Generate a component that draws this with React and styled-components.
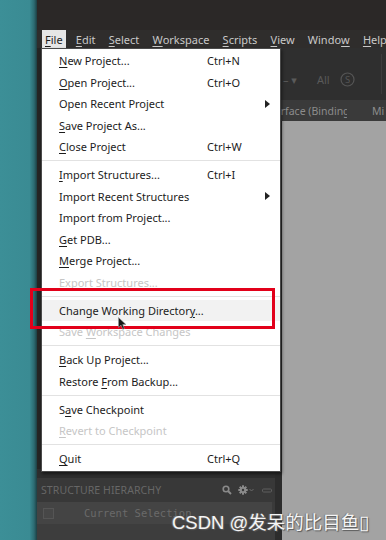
import React from 'react';
import styled, { createGlobalStyle } from 'styled-components';

const GlobalStyle = createGlobalStyle`
  html, body {
    margin: 0;
    padding: 0;
    background: #3b8d95;
  }
  body {
    font-family: 'Noto Sans', 'DejaVu Sans', sans-serif;
  }
`;

const Page = styled.div`
  position: relative;
  width: 386px;
  height: 540px;
  display: flex;
  overflow: hidden;
`;

const Desktop = styled.div`
  width: 37px;
  flex-shrink: 0;
  background: linear-gradient(90deg, #3c8f97 0%, #3a8b93 80%, #2c6b72 92%, #1d3f43 100%);
`;

const Window = styled.div`
  position: relative;
  flex: 1;
  display: flex;
  flex-direction: column;
  background: #2e2c2b;
  overflow: hidden;
`;

const TitleBar = styled.div`
  height: 30px;
  background: #2b2827;
`;

const MenuBar = styled.div`
  height: 18px;
  display: flex;
  align-items: stretch;
  gap: 7.2px;
  padding-left: 5px;
  background: #2f2d2c;
  font-size: 11px;
`;

const BarItem = styled.div`
  display: flex;
  align-items: center;
  padding: 0 3px;
  color: ${(p) => (p.$open ? '#1c1c1c' : '#c9c9c9')};
  background: ${(p) => (p.$open ? '#e6e6e6' : 'transparent')};
  white-space: nowrap;
`;

const Mn = styled.span`
  text-decoration: underline;
  text-underline-offset: 2px;
  text-decoration-thickness: 1px;
`;

const Body = styled.div`
  flex: 1;
  display: flex;
  min-height: 0;
`;

const LeftPane = styled.div`
  width: 238px;
  display: flex;
  flex-direction: column;
  background: #262524;
`;

const LeftFill = styled.div`
  flex: 1;
`;

const Dock = styled.div`
  height: 62px;
  display: flex;
  flex-direction: column;
  background: #3a3a3a;
  border-top: 9px solid #2e2e2e;
`;

const DockHeader = styled.div`
  height: 24px;
  display: flex;
  align-items: center;
  padding: 0 3px 0 4px;
  gap: 6px;
  background: #383838;
`;

const DockTitle = styled.div`
  flex: 1;
  font-size: 10.5px;
  color: #676767;
  letter-spacing: 0.1px;
`;

const DockRow = styled.div`
  height: 22px;
  display: flex;
  align-items: center;
  gap: 30px;
  padding-left: 6px;
  background: #444444;
  margin-right: 3px;
`;

const Check = styled.div`
  width: 9px;
  height: 9px;
  border: 1px solid #555;
  background: #474747;
`;

const MonoText = styled.div`
  font-family: 'DejaVu Sans Mono', 'Liberation Mono', monospace;
  font-size: 10.5px;
  color: #6a6a6a;
`;

const DockRest = styled.div`
  flex: 1;
  background: #3d3d3d;
`;

const RightPane = styled.div`
  flex: 1;
  display: flex;
  flex-direction: column;
  min-width: 0;
`;

const Toolbar = styled.div`
  height: 52px;
  box-sizing: border-box;
  padding: 10px 0 0 8px;
  display: flex;
  align-items: center;
  gap: 10px;
  background: #2f2f2f;
  color: #5a5a5a;
  font-size: 11px;
`;

const ToolLabel = styled.span`
  margin-left: ${(p) => p.$ml || 0}px;
`;

const ToolDivider = styled.div`
  width: 1px;
  height: 40px;
  align-self: flex-start;
  margin-top: -4px;
  background: #3c3c3c;
  margin-left: 16px;
`;

const TabRow = styled.div`
  height: 21px;
  display: flex;
  align-items: center;
  background: #3a3a3a;
  font-size: 10.5px;
  color: #8c8c8c;
  white-space: nowrap;
  overflow: hidden;
`;

const Tab = styled.div`
  width: ${(p) => p.$w}px;
  margin-left: ${(p) => p.$ml || 0}px;
  overflow: hidden;
  flex-shrink: 0;
`;

const Viewport = styled.div`
  flex: 1;
  background: #a3a3a3;
  border-left: 7px solid #2c2c2c;
`;

const Dropdown = styled.div`
  position: absolute;
  top: 48px;
  left: 4px;
  width: 238px;
  padding: 1px 0;
  background: #ffffff;
  border: 1px solid #4a4a4a;
  box-shadow: 1px 2px 3px rgba(0, 0, 0, 0.5);
  font-size: 11px;
`;

const Item = styled.div`
  height: 21.5px;
  display: grid;
  grid-template-columns: 148px 1fr 18px;
  align-items: center;
  padding: 0 4px 0 17px;
  color: ${(p) => (p.$disabled ? '#c6c6c6' : '#1c1c1c')};
  background: ${(p) => (p.$hover ? '#f2f2f2' : 'transparent')};
  white-space: nowrap;
`;

const Shortcut = styled.span`
  color: #1c1c1c;
`;

const Arrow = styled.span`
  width: 0;
  height: 0;
  justify-self: center;
  border-top: 4px solid transparent;
  border-bottom: 4px solid transparent;
  border-left: 5px solid #222;
`;

const Separator = styled.div`
  height: 6.5px;
  display: flex;
  align-items: center;
  &::after {
    content: '';
    flex: 1;
    height: 1px;
    background: #e2e2e2;
  }
`;

const Highlight = styled.div`
  position: absolute;
  left: 30px;
  top: 288px;
  width: 239px;
  height: 35px;
  border: 3px solid #e2001a;
  pointer-events: none;
`;

const Cursor = styled.svg`
  position: absolute;
  left: 118px;
  top: 317px;
`;

const Watermark = styled.div`
  position: absolute;
  left: 172px;
  top: 508px;
  font-family: 'Liberation Sans', 'Noto Sans CJK SC', sans-serif;
  font-size: 18.5px;
  color: #f5f5f5;
  text-shadow: 1px 1px 1px #5a5a5a, -1px 0 1px #777;
  white-space: nowrap;
`;

const menuBar = [
  ['F', 'ile', true],
  ['E', 'dit'],
  ['S', 'elect'],
  ['W', 'orkspace'],
  ['S', 'cripts'],
  ['V', 'iew'],
  ['Windo', 'w'],
  ['H', 'elp'],
];

// [before, mnemonic, after, shortcut, submenu, disabled, hover]
const groups = [
  [
    ['', 'N', 'ew Project...', 'Ctrl+N'],
    ['', 'O', 'pen Project...', 'Ctrl+O'],
    ['Open Recent Project', '', '', '', true],
    ['', 'S', 'ave Project As...'],
    ['', 'C', 'lose Project', 'Ctrl+W'],
  ],
  [
    ['', 'I', 'mport Structures...', 'Ctrl+I'],
    ['Import Recent Structures', '', '', '', true],
    ['Import from Project...', '', ''],
    ['', 'G', 'et PDB...'],
    ['', 'M', 'erge Project...'],
    ['Export Structures...', '', '', '', false, true],
  ],
  [
    ['Change Working Director', 'y', '...', '', false, false, true],
    ['Save ', 'W', 'orkspace Changes', '', false, true],
  ],
  [
    ['', 'B', 'ack Up Project...'],
    ['Restore ', 'F', 'rom Backup...'],
  ],
  [
    ['S', 'a', 've Checkpoint'],
    ['', 'R', 'evert to Checkpoint', '', false, true],
  ],
  [['', 'Q', 'uit', 'Ctrl+Q']],
];

function SearchIcon() {
  return (
    <svg width="10" height="10" viewBox="0 0 10 10">
      <circle cx="4" cy="4" r="2.8" fill="none" stroke="#8a8a8a" strokeWidth="1.6" />
      <line x1="6" y1="6" x2="9" y2="9" stroke="#8a8a8a" strokeWidth="2" />
    </svg>
  );
}

function GearIcon() {
  return (
    <svg width="18" height="10" viewBox="0 0 18 10">
      <g fill="#8a8a8a">
        <circle cx="5" cy="5" r="3.2" />
        {[0, 45, 90, 135].map((a) => (
          <rect key={a} x="4" y="0.3" width="2" height="9.4" transform={`rotate(${a} 5 5)`} />
        ))}
      </g>
      <circle cx="5" cy="5" r="1.2" fill="#383838" />
      <path d="M11.5 4 L13.5 6 L15.5 4" fill="none" stroke="#6a6a6a" strokeWidth="1" />
    </svg>
  );
}

function MinIcon() {
  return (
    <svg width="10" height="10" viewBox="0 0 10 10">
      <rect x="0.5" y="4" width="9" height="3" rx="1" fill="none" stroke="#5e5e5e" strokeWidth="1" />
    </svg>
  );
}

export default function App() {
  return (
    <Page>
      <GlobalStyle />
      <Desktop />
      <Window>
        <TitleBar />
        <MenuBar>
          {menuBar.map(([a, b, open], i) => (
            <BarItem key={i} $open={open}>
              {i === 6 ? (
                <>
                  {a}
                  <Mn>{b}</Mn>
                </>
              ) : (
                <>
                  <Mn>{a}</Mn>
                  {b}
                </>
              )}
            </BarItem>
          ))}
        </MenuBar>
        <Body>
          <LeftPane>
            <LeftFill />
            <Dock>
              <DockHeader>
                <DockTitle>STRUCTURE HIERARCHY</DockTitle>
                <SearchIcon />
                <GearIcon />
                <MinIcon />
              </DockHeader>
              <DockRow>
                <Check />
                <MonoText>Current Selection</MonoText>
              </DockRow>
              <DockRest />
            </Dock>
          </LeftPane>
          <RightPane>
            <Toolbar>
              <ToolLabel>– ▾</ToolLabel>
              <ToolLabel $ml={10}>All</ToolLabel>
              <svg width="15" height="15" viewBox="0 0 15 15">
                <circle cx="7.5" cy="7.5" r="6.5" fill="none" stroke="#555" strokeWidth="1.2" />
                <text x="7.5" y="11" fontSize="9.5" textAnchor="middle" fill="#555" fontFamily="Noto Sans, sans-serif">
                  S
                </text>
              </svg>
              <ToolDivider />
            </Toolbar>
            <TabRow>
              <Tab $w={86} $ml={-14}>Interface (Binding Si</Tab>
              <Tab $w={16} $ml={25}>Mi</Tab>
            </TabRow>
            <Viewport />
          </RightPane>
        </Body>
        <Dropdown>
          {groups.map((g, gi) => (
            <React.Fragment key={gi}>
              {gi > 0 && <Separator />}
              {g.map(([pre, mn, post, sc, sub, dis, hov], ii) => (
                <Item key={ii} $disabled={dis} $hover={hov}>
                  <span>
                    {pre}
                    {mn && <Mn>{mn}</Mn>}
                    {post}
                  </span>
                  <Shortcut>{sc}</Shortcut>
                  {sub ? <Arrow /> : <span />}
                </Item>
              ))}
            </React.Fragment>
          ))}
        </Dropdown>
      </Window>
      <Highlight />
      <Cursor width="9" height="13" viewBox="0 0 9 13">
        <path d="M0.5 0.5 L0.5 10.5 L3 8.2 L4.8 12.3 L6.4 11.6 L4.7 7.6 L8 7.6 Z" fill="#1a1a1a" stroke="#9a9a9a" strokeWidth="0.6" />
      </Cursor>
      <Watermark>CSDN @发呆的比目鱼▯</Watermark>
    </Page>
  );
}
